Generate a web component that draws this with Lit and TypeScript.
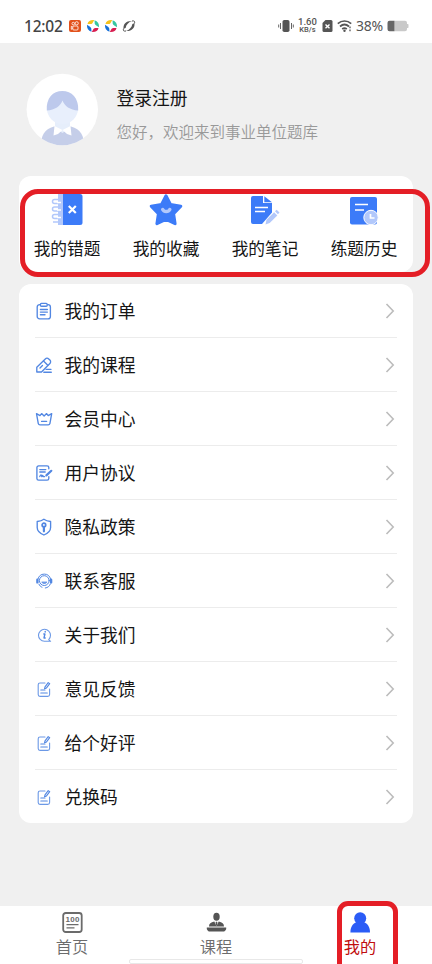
import { LitElement, html, svg, css } from "lit";
import { customElement } from "lit/decorators.js";

// Line icons of the menu, drawn in a 20x20 box.
const noteIcon = svg`
  <path d="M11 4H6a1.800 1.800 0 0 0-1.800 1.800v9.800a1.800 1.800 0 0 0 1.800 1.800h7.800a1.800 1.800 0 0 0 1.800-1.800V10" stroke-width="1.100" opacity=".85"/>
  <path d="M10.500 9.800l.5-2 3.200-4.200 1.500 1.100-3.200 4.200z" stroke-width="1.100" />
  <path d="M6.800 11h4.200M6.800 14h6.500" stroke-width="1.100"/>`;

const icons: Record<string, unknown> = {
  order: svg`
    <rect x="3.200" y="3.600" width="13.200" height="14.200" rx="2.400"/>
    <rect x="6.400" y="2.400" width="6.800" height="2.800" rx="1" fill="#fff"/>
    <path d="M6.400 8.500h7M6.400 11.100h7M6.400 13.700h4.600"/>`,
  course: svg`
    <path d="M2.800 17v-4.800l8.500-8.300a2.400 2.400 0 0 1 3.400 0l1.200 1.200a2.400 2.400 0 0 1 0 3.400L7.500 17z"/>
    <path d="M9.500 6l4.300 4.300M6 13l2.500-2.500M12 14.300H17M9.800 17.200H17.300"/>`,
  vip: svg`
    <path d="M2.500 4.600l3.500 2 1.600-2 2.500 2.500 2.500-2.500 1.600 2 3.500-2-1.800 10a1.800 1.800 0 0 1-1.700 1.300H6a1.800 1.800 0 0 1-1.700-1.300z"/>
    <path d="M7.600 12.400h5"/>`,
  terms: svg`
    <path d="M14.800 5.800V4.600a1.700 1.700 0 0 0-1.700-1.700H4.600a1.700 1.700 0 0 0-1.700 1.700v10.800a1.700 1.700 0 0 0 1.700 1.700h8.500a1.700 1.700 0 0 0 1.700-1.700v-1.800"/>
    <path d="M5.800 6.600h6M5.800 9h5.400M5.800 13.600c1-2.400 1.800-2.200 2 0 .5-1.700 1.200-1.200 1.400 0h1.400"/>
    <path d="M12.400 12.400l4.900-4.600" stroke-width="2.200"/>`,
  privacy: svg`
    <path d="M9.900 2.300c2 1.500 4.300 2 6.700 2.200v6c0 3.400-2.900 5.900-6.700 7.500-3.800-1.600-6.700-4.100-6.700-7.500v-6c2.400-.2 4.700-.7 6.700-2.200z"/>
    <circle cx="9.900" cy="8" r="1.800" stroke-width="1.700"/>
    <path d="M9.900 9.800v4.500" stroke-width="2.200"/>`,
  service: svg`
    <path d="M4 8a6.500 6.500 0 0 1 12.600 0" stroke-width="1"/>
    <circle cx="10.300" cy="9.600" r="4.900" stroke-width="1"/>
    <path d="M3.400 8.800v2.600M17.100 8.800v2.600" stroke-width="2.400"/>
    <path d="M16.300 13c-.6 2.200-2.400 3.600-5 4M5 13.300c.5 1.400 1.600 2.400 3 2.900" stroke-width="1"/>
    <path d="M7.800 11.300c1.200 1.700 3.800 1.700 5 0z" fill="#5287e2" stroke-width=".7"/>`,
  about: svg`
    <path d="M16.600 16.300h-6.200a6 6 0 1 1 6.100-6c0 1.900-.7 3.300-1.800 4.300z" stroke-width="1.100" opacity=".85"/>
    <path d="M9.800 9h1.100l-.9 4h1.200M11.200 6.500v.6" stroke-width="1.400"/>`,
  note: noteIcon,
};

const gridIcons: Record<string, unknown> = {
  wrong: svg`
    <path d="M8 2h7v31H8z" fill="#b2c8fb"/>
    <path d="M9 7.500H4.500a2 2 0 0 0 0 4H9M9 15H4.500a2 2 0 0 0 0 4H9M9 22.500H4.500a2 2 0 0 0 0 4H9M9 30H3" fill="none" stroke="#b2c8fb" stroke-width="1.500"/>
    <path d="M11 10.500H7M11 18H7M11 25.500H7" stroke="#fff" stroke-width="1.600"/>
    <path d="M13 2h17a2.500 2.500 0 0 1 2.500 2.500v26A2.500 2.500 0 0 1 30 33H13z" fill="#3c7bf8"/>
    <path d="M18.800 14l7 7M25.800 14l-7 7" stroke="#fff" stroke-width="2.200"/>`,
  star: svg`
    <path d="M17 3.800l4.500 8.600 10.300 1.800-7.200 7.500 1.500 10-9.100-4.300-9.100 4.300 1.500-10-7.200-7.500 10.300-1.800z" fill="#3c7bf8" stroke="#3c7bf8" stroke-width="3" stroke-linejoin="round"/>
    <path d="M13.700 17.500c1.500 2.800 5.600 2.800 7.100 0" fill="none" stroke="#b2c8fb" stroke-width="3.500" stroke-linecap="round"/>`,
  notes: svg`
    <path d="M5 4h10v7h9v9.500L14 32H5a2 2 0 0 1-2-2V6a2 2 0 0 1 2-2z" fill="#3c7bf8"/>
    <path d="M16.300 4.300l7.700 6h-7.700z" fill="#3c7bf8"/>
    <path d="M7 15.500h13M7 19.500h10" stroke="#fff" stroke-width="1.500"/>
    <path d="M17.500 32.500l1-4.800 7.600-7.500 3.200 3.200-7.600 7.500z" fill="#b2c8fb"/>
    <path d="M27 19.300l1.600-1.600 2.900 2.900-1.600 1.600z" fill="#b2c8fb"/>`,
  history: svg`
    <rect x="3" y="5" width="27" height="27.500" rx="2" fill="#3c7bf8"/>
    <path d="M8 12.500h13M8 18h9" stroke="#fff" stroke-width="1.600"/>
    <circle cx="24" cy="25.500" r="7.200" fill="#b2c8fb" stroke="#fff" stroke-width="1"/>
    <path d="M23.500 22v4h4" fill="none" stroke="#fff" stroke-width="1.700"/>`,
};

const tabIcons: Record<string, unknown> = {
  home: svg`
    <rect x="1.200" y="1" width="18.500" height="19" rx="2.500" fill="none" stroke="#6b6b6b" stroke-width="1.800"/>
    <text x="10.500" y="10" text-anchor="middle" textLength="14" class="hundred">100</text>
    <path d="M4.500 12.600h12M4.500 15.800h8" stroke="#6b6b6b" stroke-width="1.300"/>`,
  lesson: svg`
    <ellipse cx="10.500" cy="4.700" rx="3.200" ry="4" fill="#555"/>
    <path d="M3 14.500c0-3 1.800-4.300 5.300-5l2.200 4.500 2.200-4.500c3.500.7 5.300 2 5.300 5z" fill="#555"/>
    <path d="M10.500 9.500l1 1-.6 3h-.8l-.6-3z" fill="#555"/>
    <path d="M.8 15.400h19.400v1.600c-.4 1.500-1.600 2.600-3 2.600H3.800c-1.400 0-2.600-1.100-3-2.600z" fill="#555"/>`,
  me: svg`
    <circle cx="10.200" cy="6.200" r="6" fill="#2b5cf6"/>
    <path d="M6.700 10h7c4 1.500 6.300 5 6.300 10.500H.4C.4 15 2.700 11.500 6.700 10z" fill="#2b5cf6"/>`,
};

@customElement("app-root")
export class AppRoot extends LitElement {
  static styles = css`
    :host {
      display: flex;
      flex-direction: column;
      position: relative;
      width: 432px;
      height: 964px;
      overflow: hidden;
      background: #f0f0f0;
      color: #151515;
      font-family: "Noto Sans CJK SC", sans-serif;
    }
    * { box-sizing: border-box; }
    svg { display: block; flex: none; }
    .status {
      height: 43px;
      flex: none;
      background: #fff;
      display: flex;
      align-items: center;
      padding: 9px 23px 0 24px;
      color: #555;
      font-family: "Noto Sans", sans-serif;
    }
    .time { font-size: 15.500px; width: 44px; line-height: 20px; white-space: nowrap; color: #444; font-weight: 500; letter-spacing: -.2px; }
    .apps { display: flex; gap: 4px; }
    .right { display: flex; align-items: center; margin-left: auto; }
    .speed { font: 500 9.500px/8.500px Roboto, sans-serif; text-align: center; margin: 0 5px 0 4px; width: 19px; white-space: nowrap; }
    .speed div:last-child { font-size: 7.500px; }
    .pct { font-size: 14px; margin: 0 4px 0 4px; width: 27px; line-height: 18px; white-space: nowrap; letter-spacing: -.3px; }
    .profile { height: 133px; flex: none; display: flex; padding: 30px 0 0 26px; }
    .who { padding: 12px 0 0 18.500px; }
    .name { font-size: 17.800px; line-height: 24px; }
    .hello { font-size: 15.500px; line-height: 22px; margin-top: 11px; color: #999; font-weight: 350; }
    .card { margin: 0 19px; background: #fff; border-radius: 12px; flex: none; }
    .quick { height: 96px; display: grid; grid-template-columns: repeat(4, 99px); padding-top: 16px; margin-bottom: 12px; }
    .tile { display: flex; flex-direction: column; align-items: center; font-size: 16.700px; line-height: 24px; gap: 9px; white-space: nowrap; margin-left: -3px; }
    .menu { height: 539px; padding: 0 16px; }
    .row { height: 54px; display: flex; align-items: center; border-bottom: 1px solid #ececec; font-size: 17.800px; }
    .row:last-child { border: 0; height: 53px; }
    .line { margin-left: -1px; fill: none; stroke: #5287e2; stroke-width: 1.350; stroke-linecap: round; stroke-linejoin: round; }
    .label { margin-left: 10.500px; line-height: 26px; flex: 1; padding-bottom: 2px; }
    .tabs { height: 58px; flex: none; margin-top: auto; background: #fff; display: grid; grid-template-columns: repeat(3, 1fr); }
    .tab { display: flex; flex-direction: column; align-items: center; padding-top: 6px; gap: 1px; font-size: 16.200px; line-height: 24px; color: #6c6c6c; font-weight: 350; }
    .tab.active { color: #c00d0d; font-weight: 400; }
    .hundred { font: 700 8px "Liberation Sans", sans-serif; fill: #6b6b6b; }
    .grip { position: absolute; left: 129px; top: 959px; width: 174px; height: 5px; background: #fff; border: 1px solid #e8e8e8; border-radius: 2px; }
    .mark { position: absolute; border: 5px solid #e41e26; }
    .mark.wide { left: 20px; top: 189px; width: 410px; height: 88px; border-radius: 18px; }
    .mark.small { left: 337px; top: 901px; width: 61px; height: 76px; border-radius: 11px; }
    .wifi { margin-left: 4px; }
  `;

  private tiles = [["wrong", "我的错题"], ["star", "我的收藏"], ["notes", "我的笔记"], ["history", "练题历史"]];
  private rows = [
    ["order", "我的订单"], ["course", "我的课程"], ["vip", "会员中心"], ["terms", "用户协议"], ["privacy", "隐私政策"],
    ["service", "联系客服"], ["about", "关于我们"], ["note", "意见反馈"], ["note", "给个好评"], ["note", "兑换码"],
  ];
  private tabs = [["home", "首页"], ["lesson", "课程"], ["me", "我的"]];

  private swirl() {
    return html`<svg width="14" height="14" viewBox="0 0 14 14">
      <path d="M1.500 5C2 2.200 4.500.8 8.200 1.100L6 5z" fill="#f6c21c"/>
      <path d="M8.500 1.200C11.700 2 13.300 4.500 13 8.200L8.800 5.500z" fill="#35c7a0"/>
      <path d="M12.500 9C12 11.800 9.500 13.200 5.800 12.900L8 9z" fill="#d81e50"/>
      <path d="M5.500 12.800C2.300 12 .7 9.500 1 5.800L5.200 8.500z" fill="#1670d8"/>
      <circle cx="7" cy="7" r="2.600" fill="#fff"/>
    </svg>`;
  }

  render() {
    return html`
      <div class="status">
        <div class="time">12:02</div>
        <div class="apps">
          <svg width="14" height="14" viewBox="0 0 14 14">
            <rect x="1" y="1" width="12" height="12" rx="2" fill="#e2511b"/>
            <g fill="none" stroke="#fff" stroke-width=".8"><circle cx="5.300" cy="4.600" r="1.300"/><circle cx="8.700" cy="4.300" r="1.600"/><rect x="4.800" y="7" width="5.200" height="4" rx="1"/><path d="M4.800 8L3.300 7.300v3l1.500-.7"/></g>
          </svg>
          ${this.swirl()}${this.swirl()}
          <svg width="14" height="14" viewBox="0 0 14 14">
            <path d="M1.600 9.800C.8 5 4.500 1.600 10 2 6.500 3.200 4.300 5.500 3.600 9z" fill="#555"/>
            <path d="M12.400 4.200c.8 4.800-2.900 8.200-8.400 7.800 3.500-1.200 5.700-3.500 6.400-7z" fill="#555"/>
            <path d="M1.600 9.500c-.8 2 0 3 2.400 2.500M10 2c2.400-.5 3.200.5 2.400 2.500" fill="none" stroke="#555" stroke-width="1"/>
          </svg>
        </div>
        <div class="right">
          <svg width="16" height="14" viewBox="0 0 16 14">
            <rect x="4.500" y="1" width="7" height="12" rx="1.800" fill="#555"/>
            <path d="M2.500 4v6M13.500 4v6M.7 5.500v3M15.300 5.500v3" stroke="#666" stroke-width="1"/>
          </svg>
          <div class="speed"><div>1.60</div><div>KB/s</div></div>
          <svg width="11" height="14" viewBox="0 0 11 14">
            <path d="M3.500 1H9a1.500 1.500 0 0 1 1.500 1.500v9A1.500 1.500 0 0 1 9 13H2A1.500 1.500 0 0 1 .5 11.500V4z" fill="#555"/>
            <path d="M3.500 5.500l4 3.800M7.500 5.500l-4 3.800" stroke="#fff" stroke-width="1.400"/>
          </svg>
          <svg class="wifi" width="15" height="14" viewBox="0 0 15 14">
            <path d="M.8 4.700c4-3.600 9.400-3.600 13.400 0M3 7.500c2.700-2.400 6.300-2.400 9 0M5.200 10c1.400-1.200 3.200-1.200 4.600 0" fill="none" stroke="#555" stroke-width="1.700"/>
            <circle cx="7.500" cy="11.800" r="1.200" fill="#555"/><path d="M13 7.500v1.700M13 10.500v1.700" stroke="#555" stroke-width="1.300"/>
          </svg>
          <div class="pct">38%</div>
          <svg width="22" height="12" viewBox="0 0 22 12">
            <path d="M7.500.8H18A2 2 0 0 1 20 2.800v6.400a2 2 0 0 1-2 2H7.500zM20 4h.8a.7.700 0 0 1 .7.700v2.600a.7.700 0 0 1-.7.700H20z" fill="#c9c9c9"/>
            <path d="M7.500.8h-5a2 2 0 0 0-2 2v6.400a2 2 0 0 0 2 2h5z" fill="#666"/>
          </svg>
        </div>
      </div>

      <div class="profile">
        <svg width="72" height="73" viewBox="0 0 72 73">
          <defs><clipPath id="disc"><circle cx="36.300" cy="36.500" r="35.700"/></clipPath></defs>
          <circle cx="36.300" cy="36.500" r="35.700" fill="#fff"/>
          <g clip-path="url(#disc)">
            <path d="M15 73c0-10 3-17 13-19.500h17c10 2.500 13 9.500 13 19.500z" fill="#c5cee9"/>
            <path d="M29 48h15v7l-7.500 5-7.500-5z" fill="#e6eefb"/>
            <path d="M28.500 53l-1 9.500 4.500-1.500 4.500-4 4.500 4 4.500 1.500-1-9.500-8 4z" fill="#fff"/>
            <circle cx="36.500" cy="35.500" r="15.500" fill="#e8effc"/>
            <path d="M20.800 37.500C20 25 27 18 36.300 18s16.700 7 15.900 19.500C44 37 38.500 33 36.500 27.500 34.500 33 29 37 20.800 37.500z" fill="#bdc9ec"/>
          </g>
        </svg>
        <div class="who">
          <div class="name">登录注册</div>
          <div class="hello">您好，欢迎来到事业单位题库</div>
        </div>
      </div>

      <div class="card quick">
        ${this.tiles.map(([icon, text]) => html`<div class="tile">
          <svg width="35" height="35" viewBox="0 0 35 35">${gridIcons[icon]}</svg><span>${text}</span>
        </div>`)}
      </div>

      <div class="card menu">
        ${this.rows.map(([icon, text]) => html`<div class="row">
          <svg class="line" width="20" height="20" viewBox="0 0 20 20">${icons[icon]}</svg>
          <span class="label">${text}</span>
          <svg width="14" height="18" viewBox="0 0 14 18"><path d="M3.500 2l6.700 7-6.700 7" fill="none" stroke="#bcbcbc" stroke-width="1.600"/></svg>
        </div>`)}
      </div>

      <div class="tabs">
        ${this.tabs.map(([icon, text]) => html`<div class="tab ${icon === "me" ? "active" : ""}">
          <svg width="21" height="21" viewBox="0 0 21 21">${tabIcons[icon]}</svg><span>${text}</span>
        </div>`)}
      </div>

      <div class="grip"></div>
      <div class="mark wide"></div>
      <div class="mark small"></div>
    `;
  }
}
